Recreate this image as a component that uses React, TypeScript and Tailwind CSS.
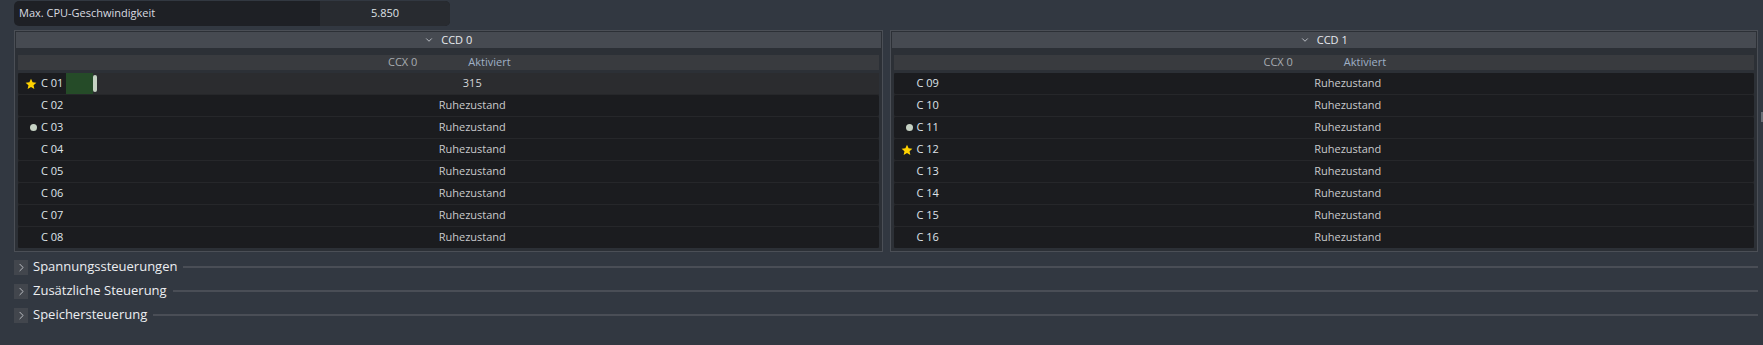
import { ChevronDown, ChevronRight } from 'lucide-react';

type Core = { name: string; mark?: 'star' | 'dot'; value?: number };

const ccd0: Core[] = [
    { name: 'C 01', mark: 'star', value: 315 },
    { name: 'C 02' },
    { name: 'C 03', mark: 'dot' },
    { name: 'C 04' },
    { name: 'C 05' },
    { name: 'C 06' },
    { name: 'C 07' },
    { name: 'C 08' },
];

const ccd1: Core[] = [
    { name: 'C 09' },
    { name: 'C 10' },
    { name: 'C 11', mark: 'dot' },
    { name: 'C 12', mark: 'star' },
    { name: 'C 13' },
    { name: 'C 14' },
    { name: 'C 15' },
    { name: 'C 16' },
];

const sections = ['Spannungssteuerungen', 'Zusätzliche Steuerung', 'Speichersteuerung'];

function Star() {
    return (
        <svg width="12" height="12" viewBox="0 0 24 24">
            <path
                d="M12 1.5l3.2 7 7.6.8-5.7 5.1 1.6 7.5L12 18l-6.7 3.9 1.6-7.5-5.7-5.1 7.6-.8z"
                fill="#ffd200"
            />
        </svg>
    );
}

function CoreRow({ core }: { core: Core }) {
    return (
        <div className="flex h-[21px] items-center rounded-[2px] bg-[#1b1c1f]">
            <div className="flex w-[48px] shrink-0 items-center">
                <div className="flex w-[23px] justify-end pr-[4px]">
                    {core.mark === 'star' && <Star />}
                    {core.mark === 'dot' && <div className="h-[7px] w-[7px] rounded-full bg-[#c6d2c4]" />}
                </div>
                <span className="text-[11px] text-[#dfe4ea]">{core.name}</span>
            </div>
            {core.value !== undefined ? (
                <div className="relative flex h-full flex-1 items-center justify-center bg-[#2b2c2f]">
                    <div className="absolute left-0 top-0 flex h-full items-center">
                        <div className="h-full w-[27px] bg-[#254b28]" />
                        <div className="h-[17px] w-[4px] rounded-[2px] bg-[#c5d2c3]" />
                    </div>
                    <span className="relative text-[11px] text-[#d4d6d8]">{core.value}</span>
                </div>
            ) : (
                <div className="flex flex-1 justify-center text-[11px] text-[#c9cacc]">Ruhezustand</div>
            )}
        </div>
    );
}

function CcdPanel({ title, cores }: { title: string; cores: Core[] }) {
    return (
        <div className="flex flex-1 flex-col border border-[#4b4f56] bg-[#2c3036] px-[3px] pb-[3px] pt-[1px]">
            <div className="-mx-[2px] flex h-[16px] items-center justify-center gap-[7px] bg-[#464a51]">
                <ChevronDown className="h-[10px] w-[10px] text-[#cfd3d8]" strokeWidth={2} />
                <span className="text-[11px] text-[#e6e9ee]">{title}</span>
            </div>
            <div className="mt-[7px] flex h-[15px] items-center bg-[#393b3f] pl-[370px] text-[11px]">
                <span className="text-[#a7abb1]">CCX 0</span>
                <span className="ml-[51px] text-[#9fb0c6]">Aktiviert</span>
            </div>
            <div className="mt-[3px] flex flex-col gap-[1px] bg-[#26272a]">
                {cores.map((c) => (
                    <CoreRow key={c.name} core={c} />
                ))}
            </div>
        </div>
    );
}

export default function App() {
    return (
        <div
            className="relative h-[345px] w-[1763px] overflow-hidden bg-[#323841]"
            style={{ fontFamily: '"Open Sans", "Noto Sans", sans-serif' }}
        >
            {/* CPU speed bar */}
            <div className="ml-[14px] mt-[1px] flex h-[25px] w-[436px] overflow-hidden rounded-[5px] bg-[#1e2025]">
                <div className="flex w-[306px] items-center pl-[5px] text-[11px] text-[#d8dbe0]">
                    Max. CPU-Geschwindigkeit
                </div>
                <div className="flex flex-1 items-center justify-center bg-[#282b30] text-[11px] text-[#dfe2e6]">
                    5.850
                </div>
            </div>

            {/* CCD panels */}
            <div className="mt-[4px] flex gap-[7px] pl-[14px] pr-[5px]">
                <CcdPanel title="CCD 0" cores={ccd0} />
                <CcdPanel title="CCD 1" cores={ccd1} />
            </div>

            {/* Collapsed sections */}
            <div className="mt-[7px] flex flex-col gap-[8px] pl-[14px] pr-[5px]">
                {sections.map((s) => (
                    <div key={s} className="flex h-[16px] items-center">
                        <div className="flex h-[15px] w-[14px] items-center justify-center bg-[#42464d]">
                            <ChevronRight className="h-[13px] w-[13px] text-[#d5d8dc]" strokeWidth={1.5} />
                        </div>
                        <span className="ml-[5px] text-[13px] text-[#eceef1]">{s}</span>
                        <div className="ml-[6px] h-[2px] flex-1 bg-[#4a4e56]" />
                    </div>
                ))}
            </div>

            {/* right edge scrollbar hint */}
            <div className="absolute right-0 top-[112px] h-[10px] w-[2px] bg-[#6a6f77]" />
        </div>
    );
}
